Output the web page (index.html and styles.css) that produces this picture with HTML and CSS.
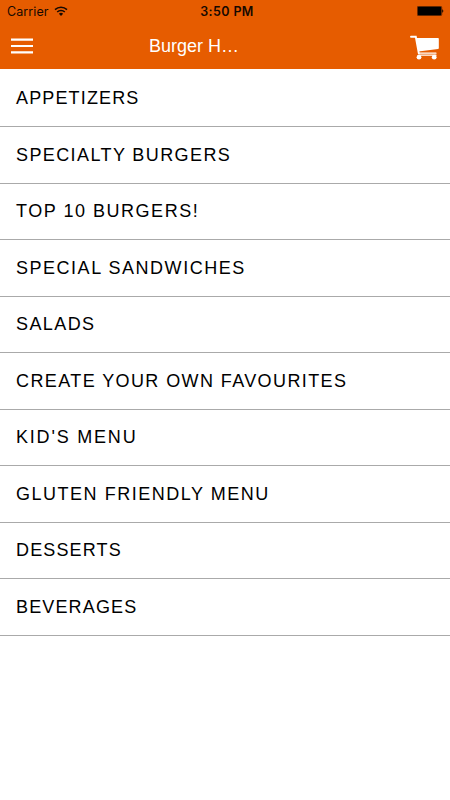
FILE: index.html
```html
<!DOCTYPE html>
<html lang="en">
<head>
    <meta charset="UTF-8">
    <meta name="viewport" content="width=device-width, initial-scale=1.0">
    <title>Burger Menu</title>
    <link rel="stylesheet" href="styles.css">
</head>
<body>
    <header class="header">
        <!-- Status bar -->
        <div class="status-bar">
            <div class="carrier">
                <span>Carrier</span>
                <svg class="wifi" viewBox="0 0 14 10">
                    <path d="M1 3.6a8.6 8.6 0 0 1 12 0M3.2 6a5.4 5.4 0 0 1 7.6 0" fill="none" stroke="#160900" stroke-width="1.5"/>
                    <path d="M4.9 7.8a3 3 0 0 1 4.2 0L7 10z" fill="#160900"/>
                </svg>
            </div>
            <span class="time">3:50 PM</span>
            <svg class="battery" viewBox="0 0 27 10">
                <rect x="0.3" y="0.3" width="24.4" height="9.4" rx="1.2" fill="none" stroke="#160900" stroke-width="0.6"/>
                <rect x="0.8" y="0.8" width="23.4" height="8.4" rx="0.6" fill="#000"/>
                <path d="M25.2 3.2a2 2 0 0 1 0 3.6z" fill="#160900"/>
            </svg>
        </div>
        <!-- Title bar -->
        <div class="nav-bar">
            <button class="menu-btn" aria-label="Menu">
                <svg viewBox="0 0 22 16">
                    <path d="M0 1.6h22M0 8h22M0 14.4h22" stroke="#fff" stroke-width="2.2"/>
                </svg>
            </button>
            <h1>Burger H…</h1>
            <button class="cart-btn" aria-label="Cart">
                <svg viewBox="0 0 30 26">
                    <path d="M1 2.8h4.8l3 16.5" fill="none" stroke="#fff" stroke-width="1.9" stroke-linecap="round"/>
                    <path d="M6 4H28q.8 0 .8.8V14q0 .9-.8 1L8.4 17.4z" fill="#fff"/>
                    <path d="M8.8 19.2H26M8.8 21.2H26" stroke="#fff" stroke-width="1.2" stroke-linecap="round"/>
                    <circle cx="9" cy="23.2" r="2.4" fill="#fff"/>
                    <circle cx="24.2" cy="23.2" r="2.4" fill="#fff"/>
                </svg>
            </button>
        </div>
    </header>

    <ul class="menu-list">
        <li class="tight">APPETIZERS</li>
        <li>SPECIALTY BURGERS</li>
        <li class="wide">TOP 10 BURGERS!</li>
        <li class="wide">SPECIAL SANDWICHES</li>
        <li>SALADS</li>
        <li>CREATE YOUR OWN FAVOURITES</li>
        <li class="wider">KID'S MENU</li>
        <li class="wide">GLUTEN FRIENDLY MENU</li>
        <li class="tight">DESSERTS</li>
        <li class="tight">BEVERAGES</li>
    </ul>
</body>
</html>
```
FILE: styles.css
```css
/* General Styling */
body {
    margin: 0;
    font-family: "Liberation Sans", Arial, sans-serif;
    background: #fff;
    color: #000;
}

.header {
    height: 69px;
    background: #e65c00;
}

.status-bar {
    height: 23px;
    padding: 0 6px 0 7px;
    display: grid;
    grid-template-columns: 1fr auto 1fr;
    align-items: center;
    color: #160900;
    font-family: Inter, sans-serif;
    font-size: 12.5px;
}

.carrier {
    display: flex;
    align-items: center;
    gap: 5px;
    letter-spacing: 0.1px;
}

.wifi {
    width: 14px;
    height: 10px;
    margin-top: -2px;
}

.time {
    padding-left: 3px;
    font-weight: 600;
    letter-spacing: 0.4px;
}

.battery {
    width: 27px;
    height: 10px;
    justify-self: end;
    margin-top: -1px;
}

.nav-bar {
    height: 46px;
    padding: 0 10px 0 11px;
    display: flex;
    align-items: center;
}

.nav-bar button {
    padding: 0;
    border: none;
    background: none;
}

.menu-btn svg {
    display: block;
    width: 22px;
    height: 16px;
}

.nav-bar h1 {
    margin: 0 auto 0 116px;
    color: #fff;
    font-size: 18px;
    font-weight: normal;
}

.cart-btn svg {
    display: block;
    width: 30px;
    height: 26px;
    margin-top: 2px;
}

/* Category list */
.menu-list {
    margin: 0;
    padding: 1.45px 0 0;
    list-style: none;
}

.menu-list li {
    box-sizing: border-box;
    height: 56.55px;
    padding: 0.55px 0 0 16px;
    border-bottom: 1px solid #aaa;
    font-size: 18px;
    line-height: 54px;
    letter-spacing: 1.4px;
}

.menu-list .tight {
    letter-spacing: 1.15px;
}

.menu-list .wide {
    letter-spacing: 1.52px;
}

.menu-list .wider {
    letter-spacing: 1.8px;
}
```
